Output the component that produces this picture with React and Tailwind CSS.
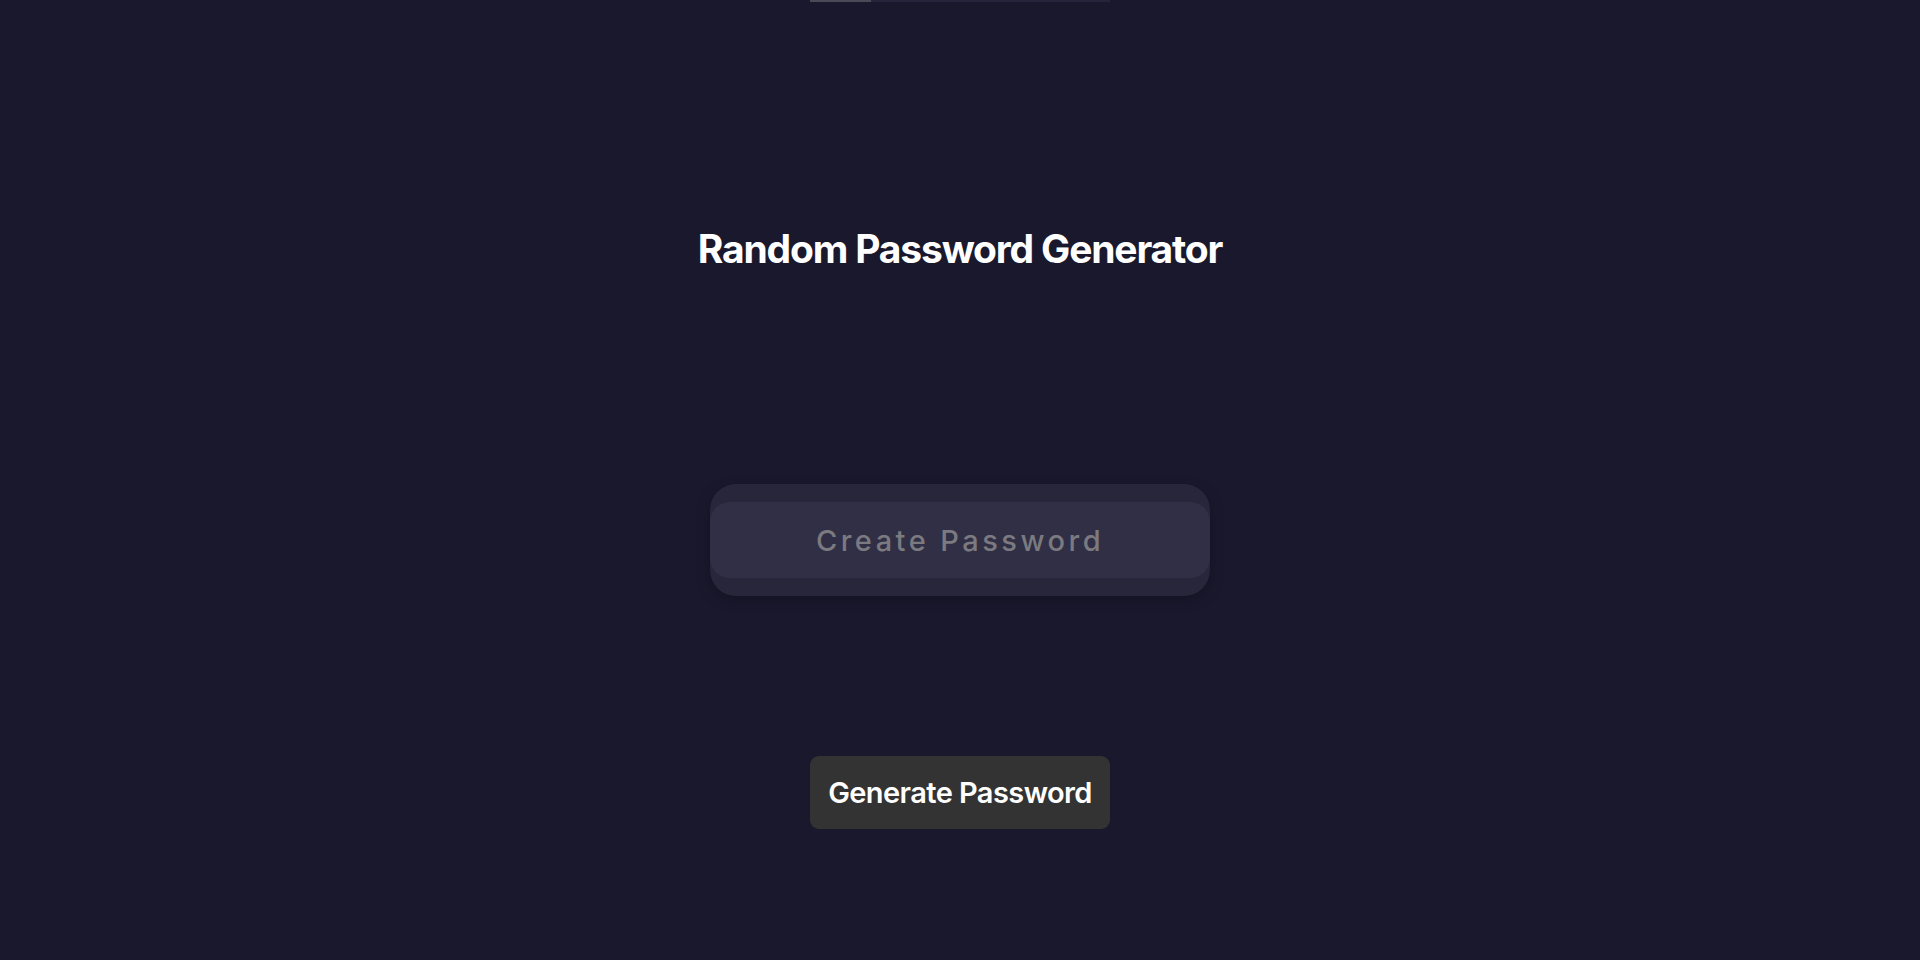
import React, { useState } from 'react';

const App = () => {
    const [password, setPassword] = useState('');

    const generate = () => {
        const chars = 'ABCDEFGHIJKLMNOPQRSTUVWXYZabcdefghijklmnopqrstuvwxyz0123456789!@#$%^&*';
        let out = '';
        for (let i = 0; i < 12; i++) out += chars[Math.floor(Math.random() * chars.length)];
        setPassword(out);
    };

    return (
        <div className="min-h-screen w-full bg-[#1a182d] flex flex-col items-center font-['Inter',sans-serif]">
            <div className="flex w-[300px] h-[2px]">
                <div className="w-[61px] bg-[#4a4958]" />
                <div className="flex-1 bg-[#26243a]" />
            </div>

            <h1 className="mt-[223px] text-[39px] font-bold text-white tracking-[-0.03em] leading-[48px]">
                Random Password Generator
            </h1>

            <div className="mt-[211px] w-[500px] h-[112px] rounded-[26px] bg-[#28263a] shadow-[0_4px_14px_rgba(0,0,0,0.25)] flex items-center">
                <input
                    type="text"
                    readOnly
                    value={password}
                    placeholder="Create Password"
                    className="w-full h-[76px] rounded-[20px] bg-[#312f45] text-center text-[29px] font-medium tracking-[0.12em] text-[#8a8a90] placeholder:text-[#7a7a80] outline-none"
                />
            </div>

            <button
                onClick={generate}
                className="mt-[160px] w-[300px] h-[73px] rounded-[9px] bg-[#333333] text-white text-[29px] font-semibold tracking-[-0.02em]"
            >
                Generate Password
            </button>
        </div>
    );
};

export default App;
